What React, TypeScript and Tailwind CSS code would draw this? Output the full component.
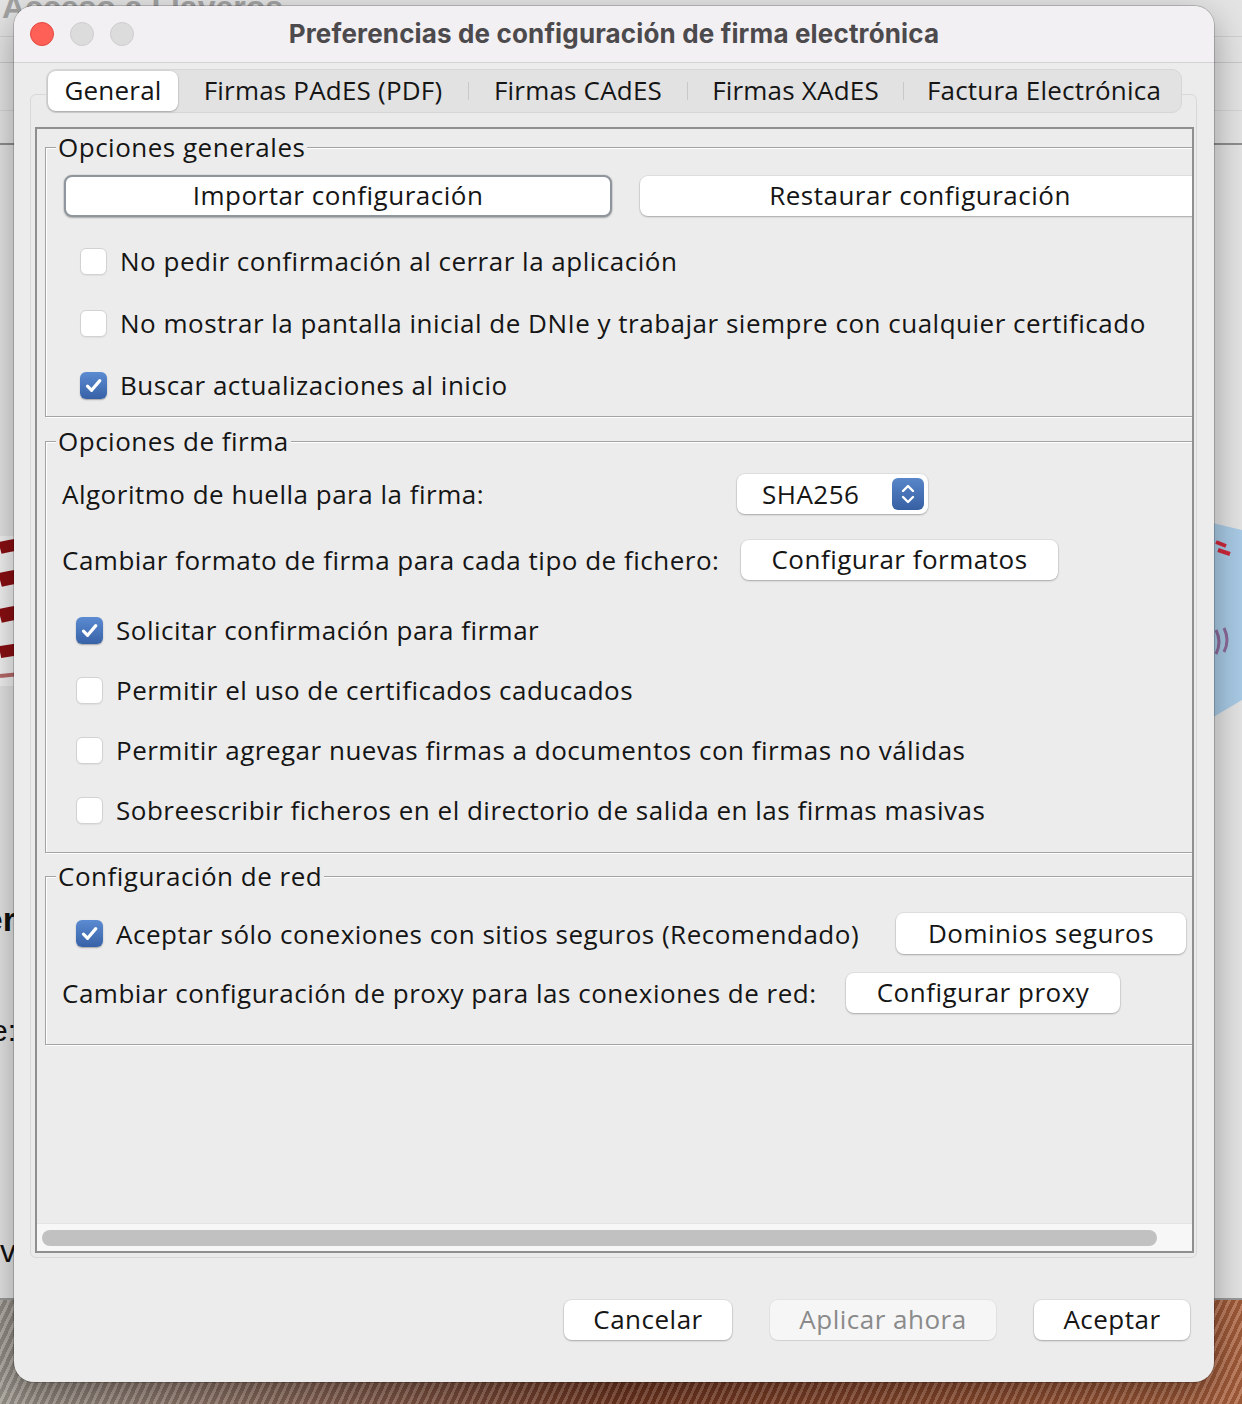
import clsx from "clsx"

const ui = "font-['Open_Sans','Noto_Sans',sans-serif] tracking-[0.5px]"

function CheckBox({ checked = false }: { checked?: boolean }) {
  if (checked) {
    return (
      <span className="flex h-[27px] w-[27px] shrink-0 items-center justify-center rounded-[6px] bg-linear-to-b from-[#5b8bd2] to-[#3862a7] shadow-[0_1px_1.5px_rgba(0,0,0,0.3)]">
        <svg viewBox="0 0 27 27" className="h-[27px] w-[27px]">
          <path
            d="M7.5 14.2 L11.6 18.3 L19.8 8.6"
            fill="none"
            stroke="white"
            strokeWidth="3.2"
            strokeLinecap="round"
            strokeLinejoin="round"
          />
        </svg>
      </span>
    )
  }
  return (
    <span className="h-[27px] w-[27px] shrink-0 rounded-[6px] border border-[#d2d2d2] bg-white shadow-[0_1px_1px_rgba(0,0,0,0.06)]" />
  )
}

function Button({
  children,
  className,
  disabled,
}: {
  children: React.ReactNode
  className?: string
  disabled?: boolean
}) {
  return (
    <div
      className={clsx(
        "flex h-[40px] shrink-0 items-center justify-center whitespace-nowrap rounded-[8px] text-[26px] leading-none",
        disabled
          ? "bg-[#f6f6f6] text-[#8a8a8a] shadow-[0_0_0_1px_rgba(0,0,0,0.04),0_1px_1px_rgba(0,0,0,0.08)]"
          : "bg-white text-[#151515] shadow-[0_0_0_1px_rgba(0,0,0,0.05),0_1px_2px_rgba(0,0,0,0.25)]",
        className,
      )}
    >
      {children}
    </div>
  )
}

function CheckRow({ label, checked, h }: { label: string; checked?: boolean; h: string }) {
  return (
    <div className={clsx("flex items-center gap-[13px] whitespace-nowrap", h)}>
      <CheckBox checked={checked} />
      <span>{label}</span>
    </div>
  )
}

function Panel({
  title,
  className,
  children,
}: {
  title: string
  className?: string
  children: React.ReactNode
}) {
  return (
    <fieldset
      className={clsx(
        "w-[1180px] border border-[#a3a3a3] shadow-[inset_1px_1px_0_#fff,1px_1px_0_#fff]",
        className,
      )}
    >
      <legend className="ml-[10px] bg-[#ececec] px-[2px] text-[26px] leading-[30px] whitespace-nowrap">
        {title}
      </legend>
      {children}
    </fieldset>
  )
}

function Combo() {
  return (
    <div className="flex h-[40px] w-[191px] shrink-0 items-center justify-between rounded-[8px] bg-white pl-[25px] pr-[4px] shadow-[0_0_0_1px_rgba(0,0,0,0.05),0_1px_2px_rgba(0,0,0,0.25)]">
      <span className="text-[26px] leading-none">SHA256</span>
      <span className="flex h-[32px] w-[32px] items-center justify-center rounded-[6px] bg-linear-to-b from-[#5886c9] to-[#3760a3]">
        <svg viewBox="0 0 32 32" className="h-[32px] w-[32px]">
          <path d="M11 13 L16 8 L21 13" fill="none" stroke="white" strokeWidth="2.4" strokeLinecap="round" strokeLinejoin="round" />
          <path d="M11 19 L16 24 L21 19" fill="none" stroke="white" strokeWidth="2.4" strokeLinecap="round" strokeLinejoin="round" />
        </svg>
      </span>
    </div>
  )
}

function Tabs() {
  const sep = <span className="h-[18px] w-px shrink-0 bg-[#c9c9c9]" />
  return (
    <div className="relative z-10 ml-[32px] flex h-[44px] w-[1136px] items-center rounded-[10px] border border-[#d6d6d6] bg-[#e2e2e2] pl-[1px] text-[26px] leading-none tracking-[0.2px] text-[#151515]">
      <div className="flex h-[40px] w-[130px] shrink-0 items-center justify-center rounded-[8px] bg-white pb-[2px] shadow-[0_0_0_1px_rgba(0,0,0,0.05),0_1px_2px_rgba(0,0,0,0.22)]">
        General
      </div>
      <div className="flex w-[290px] shrink-0 justify-center pb-[2px]">Firmas PAdES (PDF)</div>
      {sep}
      <div className="flex w-[218px] shrink-0 justify-center pb-[2px]">Firmas CAdES</div>
      {sep}
      <div className="flex w-[215px] shrink-0 justify-center pb-[2px]">Firmas XAdES</div>
      {sep}
      <div className="flex w-[280px] shrink-0 justify-center pb-[2px]">Factura Electrónica</div>
    </div>
  )
}

function Backdrop() {
  return (
    <div className="absolute inset-0 bg-[#e4e4e4] tracking-normal">
      <div className="absolute left-[2px] top-[-17px] whitespace-nowrap text-[32px] font-bold text-[#a3a3a3] font-['Liberation_Sans',sans-serif]">
        Acceso a Llaveros
      </div>
      <div className="absolute left-0 right-0 top-[36px] h-px bg-[#d0d0d0]" />
      <div className="absolute left-0 right-0 top-[62px] h-px bg-[#c8c8c8]" />
      <div className="absolute left-0 right-0 top-[110px] h-px bg-[#d5d5d5]" />
      <div className="absolute left-0 right-0 top-[143px] h-[2px] bg-[#8e8e8e]" />
      <svg className="absolute left-0 top-[536px] h-[150px] w-[60px]" viewBox="0 0 60 150">
        <rect width="60" height="150" fill="#f2f2f2" />
        <path d="M0 12 Q30 4 60 10" stroke="#8a0f12" strokeWidth="12" fill="none" />
        <path d="M0 44 Q30 36 60 42" stroke="#8a0f12" strokeWidth="14" fill="none" />
        <path d="M0 80 Q30 72 60 78" stroke="#8a0f12" strokeWidth="14" fill="none" />
        <path d="M0 116 Q30 110 60 114" stroke="#8a0f12" strokeWidth="12" fill="none" />
        <path d="M0 140 Q30 136 60 138" stroke="#b86a6a" strokeWidth="4" fill="none" />
      </svg>
      <svg className="absolute left-[1200px] top-[510px] h-[220px] w-[42px]" viewBox="0 0 42 220">
        <polygon points="0,10 42,20 42,190 0,215" fill="#a9cbe6" />
        <path d="M16 32 l10 4 M18 40 l12 4" stroke="#d0283a" strokeWidth="4" />
        <path d="M16 120 q6 12 0 24 M24 118 q6 12 0 24" stroke="#8d6b9a" strokeWidth="3" fill="none" />
      </svg>
      <div className="absolute left-[-44px] top-[894px] w-[60px] text-right text-[34px] font-bold text-[#111] font-['Liberation_Sans',sans-serif]">
        er
      </div>
      <div className="absolute left-[-44px] top-[1008px] w-[60px] text-right text-[30px] text-[#111] font-['Liberation_Sans',sans-serif]">
        e:
      </div>
      <div className="absolute left-[-44px] top-[1227px] w-[60px] text-right text-[32px] text-[#111] font-['Liberation_Sans',sans-serif]">
        lv
      </div>
      <div className="absolute bottom-0 left-0 right-0 top-[1298px] border-t-2 border-[#9a9a9a] bg-linear-to-r from-[#a29d94] via-[#7a3a22] to-[#b0643f]" />
      <div className="absolute bottom-0 left-0 right-0 top-[1300px] bg-[repeating-linear-gradient(115deg,rgba(255,255,255,0.18)_0px,rgba(255,255,255,0.18)_3px,rgba(0,0,0,0.12)_3px,rgba(0,0,0,0.12)_7px)]" />
    </div>
  )
}

export default function App() {
  return (
    <div className={clsx("relative h-[1404px] w-[1242px] overflow-hidden pl-[14px] pt-[6px]", ui)}>
      <Backdrop />

      {/* Dialog window */}
      <div className="relative flex h-[1376px] w-[1200px] flex-col overflow-hidden rounded-[20px] bg-[#ececec] text-[#151515] shadow-[0_0_0_1px_rgba(0,0,0,0.18),0_12px_36px_rgba(0,0,0,0.35)]">
        {/* Title bar */}
        <div className="grid h-[57px] shrink-0 grid-cols-[1fr_auto_1fr] items-center border-b border-[#d3d3d3] bg-[#f2f0f2]">
          <div className="flex items-center gap-[16px] pl-[16px]">
            <span className="h-[24px] w-[24px] rounded-full border border-[#e1463f] bg-[#fe5f57]" />
            <span className="h-[24px] w-[24px] rounded-full border border-[#cdcdcd] bg-[#dddcdd]" />
            <span className="h-[24px] w-[24px] rounded-full border border-[#cdcdcd] bg-[#dddcdd]" />
          </div>
          <div className="whitespace-nowrap pb-[2px] text-[26px] font-bold tracking-[0.15px] text-[#4c4a4c] font-['Inter',sans-serif]">
            Preferencias de configuración de firma electrónica
          </div>
          <div />
        </div>

        <div className="pt-[6px]">
          <Tabs />

          {/* Tab content pane */}
          <div className="ml-[16px] mt-[-19px] h-[1164px] w-[1167px] rounded-[6px] border border-[#d8d8d8] bg-[#ebebeb] pl-[4px] pt-[32px]">
            {/* Scroll pane */}
            <div className="flex h-[1126px] w-[1159px] flex-col border-2 border-[#8f8f8f] shadow-[inset_1px_1px_0_#fff]">
              <div className="flex-1 overflow-hidden bg-[#ececec] pl-[8px] pt-[3px] text-[26px] leading-[30px]">
                <Panel title="Opciones generales">
                  <div className="mt-[13px] flex items-center gap-[28px] pl-[18px]">
                    <Button className="h-[42px] w-[548px] border-2 border-[#8e959c] pb-[3px]">Importar configuración</Button>
                    <Button className="w-[560px] pb-[3px]">Restaurar configuración</Button>
                  </div>
                  <div className="mt-[13px] pl-[34px]">
                    <CheckRow h="h-[62px]" label="No pedir confirmación al cerrar la aplicación" />
                    <CheckRow h="h-[62px]" label="No mostrar la pantalla inicial de DNIe y trabajar siempre con cualquier certificado" />
                    <CheckRow h="h-[62px]" checked label="Buscar actualizaciones al inicio" />
                  </div>
                </Panel>

                <Panel title="Opciones de firma" className="mt-[9px] pb-[12px]">
                  <div className="mt-[18px] flex h-[40px] items-center pl-[16px]">
                    <span className="w-[675px] shrink-0 whitespace-nowrap">Algoritmo de huella para la firma:</span>
                    <Combo />
                  </div>
                  <div className="mt-[26px] flex h-[40px] items-center pl-[16px]">
                    <span className="w-[679px] shrink-0 whitespace-nowrap">
                      Cambiar formato de firma para cada tipo de fichero:
                    </span>
                    <Button className="w-[317px] pb-[2px]">Configurar formatos</Button>
                  </div>
                  <div className="mt-[20px] pl-[30px]">
                    <CheckRow h="h-[60px]" checked label="Solicitar confirmación para firmar" />
                    <CheckRow h="h-[60px]" label="Permitir el uso de certificados caducados" />
                    <CheckRow h="h-[60px]" label="Permitir agregar nuevas firmas a documentos con firmas no válidas" />
                    <CheckRow h="h-[60px]" label="Sobreescribir ficheros en el directorio de salida en las firmas masivas" />
                  </div>
                </Panel>

                <Panel title="Configuración de red" className="mt-[8px] pb-[31px]">
                  <div className="mt-[22px] flex h-[41px] items-center pl-[30px]">
                    <CheckBox checked />
                    <span className="ml-[13px] w-[780px] shrink-0 whitespace-nowrap">
                      Aceptar sólo conexiones con sitios seguros (Recomendado)
                    </span>
                    <Button className="h-[41px] w-[290px] pb-[2px]">Dominios seguros</Button>
                  </div>
                  <div className="mt-[19px] flex h-[40px] items-center pl-[16px]">
                    <span className="w-[784px] shrink-0 whitespace-nowrap">
                      Cambiar configuración de proxy para las conexiones de red:
                    </span>
                    <Button className="w-[274px] pb-[3px]">Configurar proxy</Button>
                  </div>
                </Panel>
              </div>

              {/* Horizontal scrollbar */}
              <div className="flex h-[28px] shrink-0 items-center border-t border-[#e4e4e4] bg-[#f7f7f7] pl-[5px]">
                <div className="h-[16px] w-[1115px] rounded-full bg-[#c1c1c1]" />
              </div>
            </div>
          </div>

          {/* Dialog buttons */}
          <div className="mt-[42px] flex justify-end gap-[38px] pr-[24px]">
            <Button className="w-[168px] pb-[3px]">Cancelar</Button>
            <Button className="w-[226px] pb-[3px]" disabled>
              Aplicar ahora
            </Button>
            <Button className="w-[156px] pb-[3px]">Aceptar</Button>
          </div>
        </div>
      </div>
    </div>
  )
}
